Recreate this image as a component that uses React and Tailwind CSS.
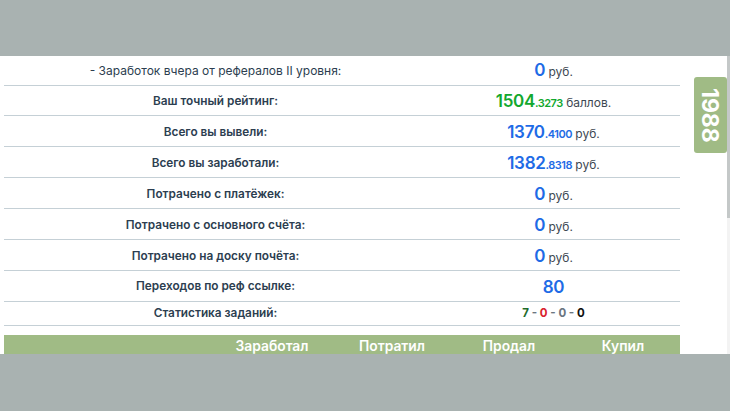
import React from 'react';

const rows = [
  { label: '- Заработок вчера от рефералов II уровня:', plain: true, value: '0', unit: 'руб.', h: 'h-[29.5px]' },
  { label: 'Ваш точный рейтинг:', value: '1504', frac: '.3273', unit: 'баллов.', color: 'text-[#12a82e]' },
  { label: 'Всего вы вывели:', value: '1370', frac: '.4100', unit: 'руб.' },
  { label: 'Всего вы заработали:', value: '1382', frac: '.8318', unit: 'руб.' },
  { label: 'Потрачено с платёжек:', value: '0', unit: 'руб.' },
  { label: 'Потрачено с основного счёта:', value: '0', unit: 'руб.' },
  { label: 'Потрачено на доску почёта:', value: '0', unit: 'руб.' },
  { label: 'Переходов по реф ссылке:', value: '80' },
];

const StatRow = ({ row }) => (
  <div className={`grid grid-cols-[423px_253px] items-center border-b-[1.5px] border-[#c5d0d6] ${row.h || 'h-[30.9px]'}`}>
    <div className={`text-center text-[#2c3e50] ${row.plain ? 'text-[12px] font-normal pt-[1px]' : 'text-[11.8px] font-semibold pt-[3px]'}`}>{row.label}</div>
    <div className={`text-center text-[#3d4852] text-[12px] ${row.plain ? 'pt-[1px]' : 'pt-[3px]'}`}>
      <span className={`text-[17px] font-semibold tracking-[-0.3px] ${row.color || 'text-[#1e6be6]'}`}>{row.value}</span>
      {row.frac && <span className={`text-[11px] font-semibold tracking-[-0.5px] ${row.color || 'text-[#1e6be6]'}`}>{row.frac}</span>}
      {row.unit && <span> {row.unit}</span>}
    </div>
  </div>
);

export default function App() {
  return (
    <div className="w-[730px] h-[411px] overflow-hidden bg-[#a9b2b1] flex flex-col font-['Inter',sans-serif]">
      <div className="h-[56px] shrink-0" />
      <div className="h-[298px] shrink-0 overflow-hidden bg-white flex items-start">
        <div className="ml-1 w-[676px] shrink-0">
          {rows.map(row => <StatRow key={row.label} row={row} />)}
          <div className="grid grid-cols-[423px_253px] items-center h-[24.5px] border-b-[1.5px] border-[#c5d0d6]">
            <div className="text-center text-[11.8px] font-semibold text-[#2c3e50] pt-[1px]">Статистика заданий:</div>
            <div className="text-center text-[11.5px] font-bold text-[#6b7680] pt-[1px]">
              <span className="text-[#1d6b2a]">7</span> - <span className="text-[#d9232e]">0</span> - <span>0</span> - <span className="text-[#111]">0</span>
            </div>
          </div>
          <div className="mt-[9px] h-[23px] bg-[#a0bb85] grid grid-cols-[208px_120px_120px_114px_114px] items-center text-center text-[13.8px] font-semibold text-white">
            <div />
            <div>Заработал</div>
            <div>Потратил</div>
            <div>Продал</div>
            <div>Купил</div>
          </div>
        </div>
        <div className="ml-[14px] mt-[21px] w-[33px] h-[76px] shrink-0 rounded-[3px] bg-[#a0bb85] flex items-center justify-center pr-[2px] text-white text-[23px] font-bold [writing-mode:vertical-rl]">
          1988
        </div>
        <div className="ml-auto w-[3px] h-full bg-[#f3f3f3]">
          <div className="h-[162px] bg-[#c4c8c8]" />
        </div>
      </div>
    </div>
  );
}
